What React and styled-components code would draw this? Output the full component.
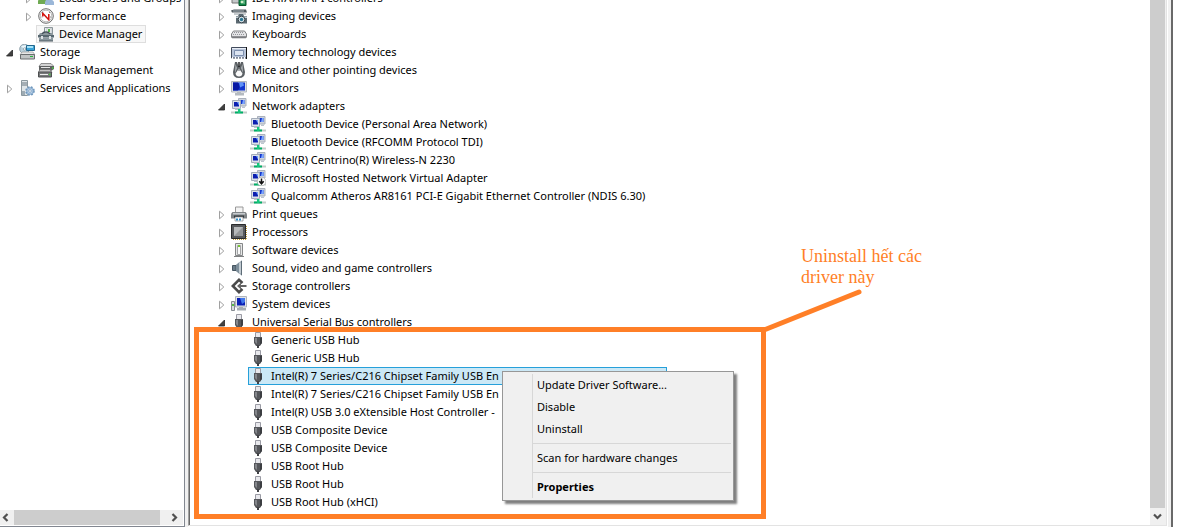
import React from 'react';
import styled, { createGlobalStyle, css } from 'styled-components';

const ACCENT = '#ff7f27';

const GlobalStyle = createGlobalStyle`
  *, *::before, *::after { box-sizing: border-box; }
  body {
    margin: 0;
    background: #fff;
    color: #000;
    font-family: "Noto Sans", "Open Sans", sans-serif;
    font-size: 11px;
    line-height: 16px;
  }
  button { font: inherit; color: inherit; }
`;

const Window = styled.main`
  display: flex;
  height: 100vh;
  overflow: hidden;
  padding-right: 9px;
  background: #fff;
`;

const ConsolePane = styled.nav`
  display: flex;
  flex-direction: column;
  flex: 0 0 185px;
  min-width: 0;
  border-right: 1px solid #828790;
  border-bottom: 1px solid #828790;
  background: #fff;
`;

const Splitter = styled.div`
  flex: 0 0 3px;
  background: #f0f0f0;
`;

const DevicePane = styled.section`
  position: relative;
  display: flex;
  flex: 1;
  min-width: 0;
  border-left: 1px solid #a0a0a0;
  border-right: 1px solid #e3e3e3;
  border-bottom: 1px solid #e3e3e3;
  box-shadow: inset 1px 0 #696969;
  margin-bottom: 1px;
`;

const WindowEdge = styled.div`
  flex: 0 0 6px;
  border-left: 1px solid #fff;
  border-right: 2px solid #696969;
  background: #f0f0f0;
`;

const Viewport = styled.div`
  flex: 1;
  min-width: 0;
  min-height: 0;
  overflow: hidden;
`;

const Tree = styled.ul`
  list-style: none;
  margin: -11px 0 0;
  padding: 0 0 0 ${p => p.$inset}px;
`;

const Row = styled.li`
  display: flex;
  height: 18px;
  padding-left: ${p => p.$level * 19}px;
  white-space: nowrap;
`;

const Expander = styled.button`
  display: flex;
  flex: 0 0 17px;
  align-items: center;
  justify-content: flex-end;
  height: 18px;
  padding: 2px 4px 0 0;
  border: 0;
  background: none;
`;

const ExpanderSpace = styled.span`
  flex: 0 0 17px;
`;

const Item = styled.span`
  position: relative;
  display: flex;
  align-items: center;
  gap: 4px;
  height: 18px;
  padding: 0 3px 0 1px;
  border: 1px solid transparent;
  ${p => p.$state === 'current' && css`
    border-color: #dedede;
    background: #f7f7f7;
  `}
  ${p => p.$state === 'selected' && css`
    min-width: 419px;
    border-color: #26a0da;
    background: #cbe8f6;
  `}
`;

const Label = styled.span`
  padding-left: 1px;
`;

const Glyph = styled.svg`
  display: block;
  flex: none;
`;

const HorizontalBar = styled.div`
  display: flex;
  flex: 0 0 15px;
  margin: 0 1px 1px 0;
  background: #f0f0f0;
`;

const VerticalBar = styled.div`
  display: flex;
  flex-direction: column;
  flex: 0 0 16px;
  border-right: 1px solid #f0f0f0;
  background: #f0f0f0;
`;

const ScrollButton = styled.button`
  display: flex;
  align-items: center;
  justify-content: center;
  flex: 0 0 ${p => p.$size}px;
  padding: 0;
  border: 0;
  background: #f0f0f0;
`;

const Thumb = styled.div`
  flex: ${p => p.$share};
  background: #cdcdcd;
`;

const Track = styled.div`
  flex: ${p => p.$share};
`;

const Menu = styled.div`
  position: absolute;
  z-index: 2;
  top: 3px;
  left: 253px;
  width: 232px;
  padding: 2px;
  border: 1px solid #979797;
  background: linear-gradient(#d7d7d7, #d7d7d7) 29px 2px / 1px calc(100% - 4px) no-repeat #f0f0f0;
  box-shadow: 3px 3px 2px rgba(0, 0, 0, 0.5);
`;

const MenuItem = styled.button`
  display: block;
  width: 100%;
  height: 22px;
  padding: 0 0 0 32px;
  border: 0;
  background: none;
  text-align: left;
  font-weight: ${p => (p.$default ? 700 : 400)};
`;

const MenuRule = styled.hr`
  height: 1px;
  margin: 3px 0 3px 27px;
  border: 0;
  background: #d7d7d7;
`;

const Highlight = styled.div`
  position: absolute;
  z-index: 1;
  top: 327px;
  left: 5px;
  width: 572px;
  height: 192px;
  border: 5px solid ${ACCENT};
  pointer-events: none;
`;

const Callout = styled.p`
  position: absolute;
  z-index: 1;
  top: 246px;
  left: 612px;
  width: 140px;
  margin: 0;
  color: ${ACCENT};
  font: 18px/21px "Liberation Serif", serif;
`;

const Pointer = styled.svg`
  position: absolute;
  z-index: 1;
  top: 286px;
  left: 569px;
`;

const icons = {
  users: (
    <>
      <circle cx="5" cy="5" r="3" fill="#8f6a4a" />
      <path d="M0 14V11q1-3 5-3t5 3v3z" fill="#6faa52" />
      <circle cx="11" cy="6" r="2.5" fill="#b98a5c" />
      <path d="M7 15v-3q1-3 4-3t5 3v3z" fill="#9bb7d8" />
    </>
  ),
  performance: (
    <>
      <circle cx="8" cy="8" r="7.3" fill="#f4f4f4" stroke="#6d6d6d" />
      <circle cx="8" cy="8" r="5.8" fill="#fff" stroke="#bdbdbd" />
      <path d="M4 5l1-1M11 4l1 1M3.5 9h1M12 9h1" stroke="#888" />
      <path d="M4.5 5l6.5 7M4.8 4.5v4M10.8 6v6.5" stroke="#d3120c" strokeWidth="1.5" fill="none" />
    </>
  ),
  manager: (
    <>
      <path d="M6.5 8V1.5h8V8" fill="#e8ecef" stroke="#8b9499" />
      <path d="M9 2h4v6H9z" fill="#fff" stroke="#9aa4aa" strokeWidth=".6" />
      <path d="M10 3h2v3h-2z" fill="#56b848" />
      <path d="M0 10l2-3h12l2 3z" fill="#8d999f" />
      <path d="M4 8q1-2 4-2t4 2" fill="none" stroke="#46545c" strokeWidth="1.4" />
      <path d="M0 9h16v2.5H0z" fill="#586870" />
      <path d="M1 11.5h14V15H1z" fill="#8a979e" />
      <path d="M1 15h14" stroke="#4d5960" />
      <path d="M3 10h2v3H3zM11 10h2v3h-2z" fill="#dce2e5" />
    </>
  ),
  storage: (
    <>
      <circle cx="5.5" cy="5" r="4.8" fill="#b9d0dc" stroke="#7c919c" strokeWidth=".8" />
      <path d="M2 2l3 3 3-4" fill="#eef8fc" />
      <circle cx="5.5" cy="5" r="1.2" fill="#fff" stroke="#6f8792" strokeWidth=".6" />
      <path d="M7.5 1.5h8v5h-8z" fill="#3aa3d8" stroke="#22678d" />
      <path d="M8 2h6v2H8z" fill="#a6e2f8" />
      <path d="M3 8h11l2 3H1z" fill="#e8e8e8" stroke="#8c8c8c" strokeWidth=".6" />
      <path d="M1.5 10.5h14v4.5h-14z" fill="#c1c4c5" stroke="#6a6e70" />
      <path d="M11 12h3v1h-3z" fill="#28b53d" />
    </>
  ),
  disk: (
    <>
      <path d="M3 1.5h10l3 3H1z" fill="#d3d3d3" stroke="#777" strokeWidth=".8" />
      <path d="M1 4h15v3l-3 2H1z" fill="#5f6162" />
      <path d="M3 5.5h9" stroke="#e5e5e5" />
      <path d="M2 7.5h10l2 3H0z" fill="#c4c4c4" stroke="#666" strokeWidth=".6" />
      <path d="M.5 10h13v5H.5z" fill="#77797a" stroke="#4d4f50" />
      <path d="M2 12.5h8" stroke="#eee" />
      <path d="M11 12.5h1.5M14 6h1.5" stroke="#45d03c" strokeWidth="1.3" />
    </>
  ),
  services: (
    <>
      <path d="M2.5.5h6v15h-6z" fill="#dfe5e8" stroke="#8b989f" />
      <path d="M3 3h5M3 5h5" stroke="#687780" />
      <path d="M3 11h3v4H3z" fill="#9eabb3" />
      <circle cx="11" cy="11" r="4" fill="#a8c5e2" stroke="#7198bd" strokeWidth="1.6" strokeDasharray="1.8 1.4" />
      <circle cx="11" cy="11" r="3.1" fill="#b5cee7" stroke="#7a9fc3" strokeWidth=".6" />
      <circle cx="11" cy="11" r="1.3" fill="#fff" stroke="#6389af" strokeWidth=".6" />
    </>
  ),
  ide: (
    <>
      <path d="M1 6h12v7H1z" fill="#c5c8ca" stroke="#777" />
      <path d="M8 9h7v6.5H8z" fill="#138a49" stroke="#08552c" />
      <path d="M10 11h2v2h-2zM13 10v4" fill="#bce8b7" stroke="#dff4dc" strokeWidth=".6" />
    </>
  ),
  imaging: (
    <>
      <path d="M0 2.5l3-1h12l1 3H1z" fill="#525b60" />
      <path d="M2 2.5h11v1H2z" fill="#a5b0b6" />
      <path d="M3 5.5h12v1H3z" fill="#8e999f" />
      <path d="M5 8h2l1-2h4l1 2h3v7.5H5z" fill="#5c6a72" />
      <path d="M5 8.5h11v1.5H5z" fill="#c6d0d5" />
      <circle cx="10.5" cy="11.5" r="3.3" fill="#dce5e9" stroke="#36444c" />
      <circle cx="10.5" cy="11.5" r="1.7" fill="#2b7794" />
    </>
  ),
  keyboard: (
    <>
      <path d="M2.5 5h11l2 3v3q0 .8-1 .8h-13q-1 0-1-.8V8z" fill="#e4e4e6" stroke="#838486" />
      <path d="M3 6.5h10M2 8.5h12" stroke="#94969b" strokeDasharray="1 1" />
      <path d="M1 11h14" stroke="#6c6e71" strokeWidth="1.4" />
    </>
  ),
  memory: (
    <>
      <path d="M.5 3.5h15V14H.5z" fill="#b9c5da" stroke="#424b5c" />
      <path d="M1 4h14v1H1z" fill="#e9eef6" />
      <path d="M3.5 6.5h9v5h-9z" fill="#dde5f2" stroke="#7d8fae" />
      <path d="M1 14h1M4 14h1M7 14h1M10 14h1M13 14h1" stroke="#fff" strokeWidth="2" />
      <path d="M15.5 3v12" stroke="#111" />
    </>
  ),
  mouse: (
    <>
      <path d="M4 0h2l1.5 4h1L10 0h2l2 10q0 6-6 6t-6-6z" fill="#5c6165" />
      <path d="M4.5 2l1.5 4-2 5zM11.5 2L10 6l2 5z" fill="#aeb3b7" />
      <path d="M8 6.5l3.5 5Q11 14.5 8 14.5t-3.5-3z" fill="#fafafa" />
      <path d="M8 0v5" stroke="#17191a" strokeWidth="1.4" />
      <circle cx="8" cy="8" r="1" fill="#8b9094" />
    </>
  ),
  monitor: (
    <>
      <path d="M.5 1.5h15v10.5H.5z" fill="#dcdfe3" stroke="#b3b8bf" />
      <path d="M2 2.5h12v8H2z" fill="#1236cf" />
      <path d="M2 2.5h5l2 4-2 4H2z" fill="#0718a4" />
      <path d="M8 2.5h4l1 3-4 2z" fill="#5d90f8" />
      <path d="M6 12h4v1h3v2.5H4V13h2z" fill="#b4bac0" />
    </>
  ),
  network: (
    <>
      <path d="M7.5.5h7.5v7.5H7.5z" fill="#cdd3dc" stroke="#aab1bc" />
      <path d="M9 2h4.5v4H9z" fill="#1638cc" />
      <path d="M12 2h1.5v4H11z" fill="#7aa6ff" />
      <path d="M1.5 2.5h8v8h-8z" fill="#dde2e9" stroke="#a4adba" />
      <path d="M3 4h5v4.5H3z" fill="#0c1fb0" />
      <path d="M6 4h2v3.5z" fill="#6d9efa" />
      <path d="M4 10.5h5v1.5H4zM11 8.5h3v1.5h-3z" fill="#bcc4ce" />
      <path d="M0 14.5h16" stroke="#c3cdc9" strokeWidth="2" />
      <path d="M4 14.5h8" stroke="#00ae67" strokeWidth="2" />
      <path d="M7 11h2.5v4H7z" fill="#15c77c" />
    </>
  ),
  printer: (
    <>
      <path d="M4.5 1h7.5v6H4.5z" fill="#f3f3f3" stroke="#999" />
      <path d="M1.5 6h13Q16 7 16 9v3.5H0V9q0-2 1.5-3z" fill="#7f8487" />
      <path d="M2 7h12v1.5H2z" fill="#c7cbce" />
      <path d="M3 9.5h10V12H3z" fill="#33383b" />
      <path d="M4 11h8v4H4z" fill="#fff" stroke="#868b8f" strokeWidth=".7" />
      <path d="M5 13.5h6" stroke="#318ec7" strokeWidth="2" strokeDasharray="2 1" />
    </>
  ),
  processor: (
    <>
      <path d="M2 15h14M15 2v14" stroke="#c19b37" strokeWidth="2" strokeDasharray="1 1" />
      <path d="M.5.5h14v14H.5z" fill="#57595b" stroke="#292a2b" />
      <path d="M3 3h9v9H3z" fill="#b7b9ba" />
      <path d="M3 12l9-9v9z" fill="#949697" />
    </>
  ),
  software: (
    <>
      <path d="M4.5 1.5h7v12h-7z" fill="#e7e8e8" stroke="#858788" />
      <path d="M6.5 3.5h3v9h-3z" fill="#fafafa" stroke="#a3a5a6" />
      <path d="M7 3h2v2H7z" fill="#75c332" />
      <path d="M3 14.5h10" stroke="#808283" />
    </>
  ),
  sound: (
    <>
      <path d="M1.5 5.5H5v5H1.5z" fill="#6a7b88" stroke="#475661" />
      <path d="M5 5l6-5v16l-6-5z" fill="#a9b5be" />
      <path d="M5 5l3-2.5v11L5 11z" fill="#7e8f9b" />
      <path d="M10.5 1v14" stroke="#5d6c77" />
      <path d="M9 3v10" stroke="#dbe2e6" />
    </>
  ),
  controller: (
    <>
      <path d="M11.5 5L8 1.8 1.8 8 8 14.2l3.5-3.2" fill="none" stroke="#4a4a4a" strokeWidth="2.6" />
      <path d="M6 8l4-3.5V7h5.5v2H10v2.5z" fill="#656565" />
    </>
  ),
  system: (
    <>
      <path d="M.5 5.5h3v9h-3z" fill="#d9dce0" stroke="#858a91" />
      <path d="M1 8h2v2H1z" fill="#57bc46" />
      <path d="M4.5.5h11v10.5h-11z" fill="#e2e5e8" stroke="#afb5bc" />
      <path d="M6 2h8v7.5H6z" fill="#0b20b4" />
      <path d="M9 2h5v4l-3 2z" fill="#4278eb" />
      <path d="M8 11h4v1h3v2.5H6V12h2z" fill="#a6adb4" />
    </>
  ),
  usb: (
    <>
      <path d="M5.5.5h5v5h-5z" fill="#e9e9ed" stroke="#9a9ba4" />
      <path d="M4 5h8v6l-2 3H6l-2-3z" fill="#56585c" />
      <path d="M5 6h2v6l-2-2z" fill="#85878c" />
      <path d="M10 6h2v5l-2 2z" fill="#3c3e42" />
      <path d="M7 13h2v3H7z" fill="#414246" />
    </>
  ),
};

icons.virtual = (
  <>
    {icons.network}
    <circle cx="11.5" cy="11.5" r="4.3" fill="#fff" stroke="#9a9a9a" strokeWidth=".6" />
    <path d="M11.5 8.5v5M9.3 11.3l2.2 2.5 2.2-2.5" fill="none" stroke="#111" strokeWidth="1.5" />
  </>
);

const Icon = ({ name }) => (
  <Glyph width="16" height="16" viewBox="0 0 16 16" aria-hidden="true">{icons[name]}</Glyph>
);

const Chevron = ({ direction }) => {
  const d = {
    left: 'M6.5 1L3 4.5 6.5 8',
    right: 'M2.5 1L6 4.5 2.5 8',
    down: 'M1 2.5L4.5 6 8 2.5',
  }[direction];
  return (
    <Glyph width="9" height="9" viewBox="0 0 9 9" aria-hidden="true">
      <path d={d} fill="none" stroke="#505050" strokeWidth="2.2" />
    </Glyph>
  );
};

const Arrow = ({ open }) => (
  <Glyph width="7" height="10" viewBox="0 0 7 10" aria-hidden="true">
    {open
      ? <path d="M6.5 2v6H.5z" fill="#404040" stroke="#262626" strokeWidth=".8" />
      : <path d="M1.5 1.2v7.6L5.8 5z" fill="#fff" stroke="#a0a0a0" />}
  </Glyph>
);

const consoleRows = [
  { level: 1, icon: 'users', text: 'Local Users and Groups', open: false },
  { level: 1, icon: 'performance', text: 'Performance', open: false },
  { level: 1, icon: 'manager', text: 'Device Manager', state: 'current' },
  { level: 0, icon: 'storage', text: 'Storage', open: true },
  { level: 1, icon: 'disk', text: 'Disk Management' },
  { level: 0, icon: 'services', text: 'Services and Applications', open: false },
];

const category = (icon, text, open = false) => ({ level: 1, icon, text, open });
const device = (icon, text, extra) => ({ level: 2, icon, text, ...extra });

const deviceRows = [
  category('ide', 'IDE ATA/ATAPI controllers'),
  category('imaging', 'Imaging devices'),
  category('keyboard', 'Keyboards'),
  category('memory', 'Memory technology devices'),
  category('mouse', 'Mice and other pointing devices'),
  category('monitor', 'Monitors'),
  category('network', 'Network adapters', true),
  device('network', 'Bluetooth Device (Personal Area Network)'),
  device('network', 'Bluetooth Device (RFCOMM Protocol TDI)'),
  device('network', 'Intel(R) Centrino(R) Wireless-N 2230'),
  device('virtual', 'Microsoft Hosted Network Virtual Adapter'),
  device('network', 'Qualcomm Atheros AR8161 PCI-E Gigabit Ethernet Controller (NDIS 6.30)'),
  category('printer', 'Print queues'),
  category('processor', 'Processors'),
  category('software', 'Software devices'),
  category('sound', 'Sound, video and game controllers'),
  category('controller', 'Storage controllers'),
  category('system', 'System devices'),
  category('usb', 'Universal Serial Bus controllers', true),
  device('usb', 'Generic USB Hub'),
  device('usb', 'Generic USB Hub'),
  device('usb', 'Intel(R) 7 Series/C216 Chipset Family USB En', { state: 'selected', menu: true }),
  device('usb', 'Intel(R) 7 Series/C216 Chipset Family USB En'),
  device('usb', 'Intel(R) USB 3.0 eXtensible Host Controller -'),
  device('usb', 'USB Composite Device'),
  device('usb', 'USB Composite Device'),
  device('usb', 'USB Root Hub'),
  device('usb', 'USB Root Hub'),
  device('usb', 'USB Root Hub (xHCI)'),
];

const ContextMenu = () => (
  <Menu role="menu">
    <MenuItem role="menuitem">Update Driver Software...</MenuItem>
    <MenuItem role="menuitem">Disable</MenuItem>
    <MenuItem role="menuitem">Uninstall</MenuItem>
    <MenuRule />
    <MenuItem role="menuitem">Scan for hardware changes</MenuItem>
    <MenuRule />
    <MenuItem role="menuitem" $default>Properties</MenuItem>
  </Menu>
);

const TreeView = ({ label, rows, inset = 0 }) => (
  <Tree role="tree" aria-label={label} $inset={inset}>
    {rows.map((row, i) => (
      <Row key={i} role="treeitem" aria-level={row.level + 1} aria-expanded={row.open} $level={row.level}>
        {row.open === undefined
          ? <ExpanderSpace />
          : <Expander aria-label={`Toggle ${row.text}`}><Arrow open={row.open} /></Expander>}
        <Item $state={row.state}>
          <Icon name={row.icon} />
          <Label>{row.text}</Label>
          {row.menu && <ContextMenu />}
        </Item>
      </Row>
    ))}
  </Tree>
);

export default function App() {
  return (
    <>
      <GlobalStyle />
      <Window>
        <ConsolePane aria-label="Console tree">
          <Viewport>
            <TreeView label="Computer Management" rows={consoleRows} />
          </Viewport>
          <HorizontalBar>
            <ScrollButton $size={10} aria-label="Scroll left"><Chevron direction="left" /></ScrollButton>
            <Track $share={4} />
            <Thumb $share={146} />
            <Track $share={6} />
            <ScrollButton $size={17} aria-label="Scroll right"><Chevron direction="right" /></ScrollButton>
          </HorizontalBar>
        </ConsolePane>
        <Splitter />
        <DevicePane aria-label="Devices">
          <Viewport>
            <TreeView label="Device Manager" rows={deviceRows} inset={4} />
          </Viewport>
          <VerticalBar>
            <Thumb $share={1} />
            <ScrollButton $size={17} aria-label="Scroll down"><Chevron direction="down" /></ScrollButton>
          </VerticalBar>
          <Highlight />
          <Callout>Uninstall hết các driver này</Callout>
          <Pointer width="106" height="50" viewBox="0 0 106 50" aria-hidden="true">
            <path d="M6 44L101 6" stroke={ACCENT} strokeWidth="5" strokeLinecap="round" />
          </Pointer>
        </DevicePane>
        <WindowEdge />
      </Window>
    </>
  );
}
